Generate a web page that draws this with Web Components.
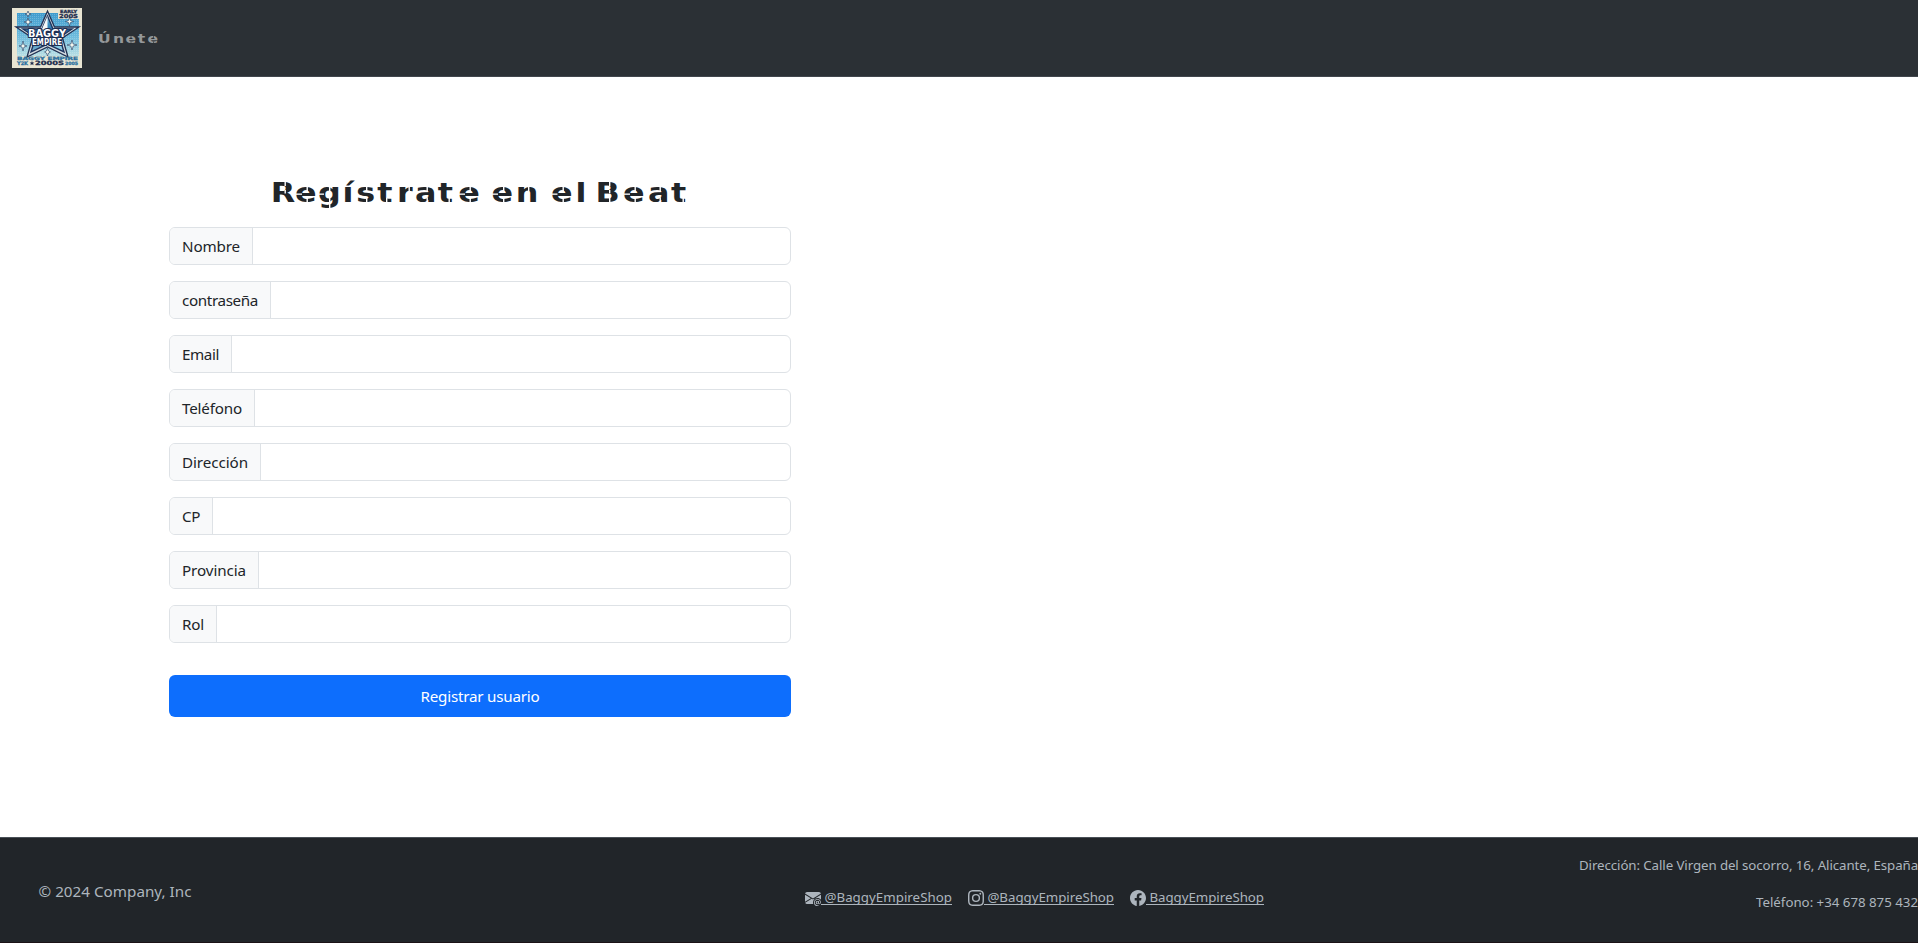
<!DOCTYPE html>
<html lang="es">
<head>
<meta charset="utf-8">
<title>Baggy Empire</title>
<style>
html,body{margin:0;height:100%;background:#fff;overflow:hidden}
body{font:15.2px/24px "Noto Sans","Open Sans",sans-serif;color:#212529}
</style>
</head>
<body>
<baggy-page></baggy-page>
<script>
const define=(name,html,setup)=>customElements.define(name,class extends HTMLElement{
  connectedCallback(){
    if(this.shadowRoot)return;
    const t=document.createElement('template');
    t.innerHTML=html;
    this.attachShadow({mode:'open'}).append(t.content.cloneNode(true));
    if(setup)setup(this,this.shadowRoot);
  }
});

/* Text spread evenly over a set advance width */
define('fit-text',`<style>:host{display:inline-block;white-space:pre}span{display:inline-block}:host([underlined]) span{text-decoration:underline;text-decoration-thickness:1px;text-underline-offset:1.5px;text-decoration-skip-ink:none}</style><span><slot></slot></span>`,
(el,root)=>{
  const s=root.querySelector('span'),w=+el.getAttribute('w');
  s.style.letterSpacing='0px';
  s.style.letterSpacing=((w-s.getBoundingClientRect().width)/el.textContent.length)+'px';
  el.style.width=w+'px';
});

define('brand-logo',`<style>:host{display:block;width:70px;height:60px}svg{display:block}text{font-family:"DejaVu Sans",sans-serif;font-weight:bold}</style>
<svg width="70" height="60" viewBox="0 0 70 60">
<defs>
<linearGradient id="sky" x2="0" y2="1"><stop stop-color="#3f9bcd"/><stop offset=".55" stop-color="#6dbbdd"/><stop offset="1" stop-color="#b9dfe4"/></linearGradient>
<linearGradient id="st" x2=".3" y2="1"><stop stop-color="#d5edf5"/><stop offset=".35" stop-color="#3c91c4"/><stop offset=".6" stop-color="#1a5c96"/><stop offset="1" stop-color="#8acbe4"/></linearGradient>
<pattern id="dots" width="2" height="2" patternUnits="userSpaceOnUse"><rect width="1" height="1" fill="#fff" opacity=".2"/></pattern>
</defs>
<rect width="70" height="60" fill="#e9e5d3"/>
<path d="M5 5H46V11H67V48H5Z" fill="url(#sky)"/><path d="M5 5H46V11H67V48H5Z" fill="url(#dots)"/>
<path d="M35.500 3L42.500 19H67L50.500 30L56 49L35.500 39L15 49L20.500 30L4 19H28.500Z" fill="#d3dce0" stroke="#223052" stroke-width="1.300"/>
<path d="M35.500 8L41 21H60L47.500 29.500L52 44L35.500 36L19 44L23.500 29.500L11 21H30Z" fill="url(#st)" stroke="#203660" stroke-width="1.400"/>
<path d="M35.500 8V24L30 21Z" fill="#f4f8f8"/>
<g fill="#f3f7ef" stroke="#243b62" stroke-width=".6"><path d="M16 10l1 3 3 1-3 1-1 3-1-3-3-1 3-1zM57.500 9l1 3.500 3 1-3 1-1 3.500-1-3.500-3-1 3-1zM11 33l1 4 3 1-3 1-1 4-1-4-3-1 3-1zM60 32l1.200 4 3.800 1-3.800 1-1.200 4-1.200-4-3.800-1 3.800-1zM35.500 40l1 3 2 1-2 1-1 3-1-3-2-1 2-1z"/><path d="M16 3l.8 2.200 2.200.8-2.200.8-.8 2.200-.8-2.200-2.200-.8 2.200-.8z"/></g>
<g fill="#fff" stroke="#1d2c50" stroke-width="2.200" paint-order="stroke" stroke-linejoin="round"><text x="16" y="29" font-size="10.500" textLength="38" lengthAdjust="spacingAndGlyphs">BAGGY</text><text x="20" y="36.500" font-size="8" textLength="30" lengthAdjust="spacingAndGlyphs">EMPIRE</text></g>
<g fill="#202c4c" stroke="#202c4c" stroke-width=".3"><text x="48" y="5.300" font-size="4.200" textLength="17" lengthAdjust="spacingAndGlyphs">EARLY</text><text x="47" y="10" font-size="5.500" textLength="19" lengthAdjust="spacingAndGlyphs">200S</text><text x="23" y="57.200" font-size="5.800" textLength="29" lengthAdjust="spacingAndGlyphs">2000S</text></g>
<g fill="#2c719f" stroke="#2c719f" stroke-width=".3"><text x="5" y="51.800" font-size="4.500" textLength="61" lengthAdjust="spacingAndGlyphs">BAGGY EMPIRE</text><text x="5" y="57" font-size="4.800" textLength="11" lengthAdjust="spacingAndGlyphs">Y2K</text><text x="53" y="57" font-size="4.500" textLength="13" lengthAdjust="spacingAndGlyphs">2005</text></g>
<path d="M20 53l.7 1.500h1.700l-1.300 1 .5 1.700-1.600-1-1.600 1 .5-1.700-1.300-1h1.700z" fill="#202c4c"/>
</svg>`);

define('site-nav',`<style>
:host{display:flex;align-items:flex-start;box-sizing:border-box;height:77px;padding:8px 12px 0;gap:17px;background:#2b3035;border-bottom:1px solid #41464d}
svg{display:block}
text{font:bold 12.500px "DejaVu Sans",sans-serif;fill:#95989a}
</style><brand-logo></brand-logo><a><svg width="62" height="60"><text transform="scale(1.25 1)" x="-.8 11.200 21.200 31 38.800" y="35">Únete</text><path d="M5.500 33.500h1v2h-1zM31.500 28h1v2h-1zM31.500 33.500h1v2h-1zM54 28h1v2h-1zM54 33.500h1v2h-1z" fill="#2b3035" opacity=".7"/></svg></a>`);

define('form-field',`<style>
:host{display:flex;box-sizing:border-box;height:38px;border:1px solid #dee2e6;border-radius:6px;overflow:hidden;background:#fff}
label{padding:6px 12px;background:#f8f9fa;border-right:1px solid #dee2e6;white-space:nowrap}
input{flex:1;min-width:0;border:0;outline:0;padding:6px 12px;font:inherit;background:none}
</style><label for="i"></label><input id="i">`,(el,root)=>{
  const f=document.createElement('fit-text');
  f.setAttribute('w',el.getAttribute('w'));
  f.textContent=el.getAttribute('label');
  root.querySelector('label').append(f);
});

/* Wide stencil lettering: stretched glyphs with thin bridges cut through the bowls */
define('stencil-title',`<style>
:host{display:block;height:34px}
h1{margin:0}svg{display:block}
text{font:bold 26.500px "DejaVu Sans",sans-serif;fill:#212529}
</style><h1><svg width="622" height="34"><text transform="scale(1.2 1)" y="26" x="84.8 105 124.2 144.6 156 173.5 190 205 224 241 262 268.8 289 308 318.3 338.8 348 355.4 378.3 399.2 418.3">Regístrate en el Beat</text><g class="cuts" fill="#fff"></g></svg></h1>`,(el,root)=>{
  const rects=[];
  for(const x of [137.5,160,197,257.500,300.500,334,393.500,465.500,490.500])rects.push([x,10.500,1.400,5],[x,21.500,1.400,6]);
  for(const x of [115.500,440])rects.push([x,5,1.400,5],[x,14,1.400,3.500]);
  rects.push([440,21,1.400,6],[160,27,1.400,6],[217,21.500,1.400,6],[279.500,21.500,1.400,6],[513.500,21.500,1.400,6],[359,10,1.400,5],[239.500,10,1.400,5]);
  for(const x of [127,149,290,323,382.500,455])rects.push([x,17.500,6,1.300]);
  root.querySelector('.cuts').innerHTML=rects.map(([x,y,w,h])=>`<rect x="${x}" y="${y}" width="${w}" height="${h}"/>`).join('');
});

define('register-form',`<style>
:host{display:flex;flex-direction:column;width:622px}
stencil-title{margin-bottom:17px}
form{display:grid;gap:16px}
button{height:42px;margin-top:16px;border:0;border-radius:6px;background:#0d6efd;color:#fff;font:inherit}
</style>
<stencil-title></stencil-title>
<form>
<form-field label="Nombre" w="58"></form-field>
<form-field label="contraseña" w="76"></form-field>
<form-field label="Email" w="37"></form-field>
<form-field label="Teléfono" w="60"></form-field>
<form-field label="Dirección" w="66"></form-field>
<form-field label="CP" w="18"></form-field>
<form-field label="Provincia" w="64"></form-field>
<form-field label="Rol" w="22"></form-field>
<button type="button"><fit-text w="119">Registrar usuario</fit-text></button>
</form>`);

define('social-link',`<style>
:host{display:flex;align-items:center;height:21px;color:#adb5bd;font-size:13.300px;line-height:21px}
svg{display:block;width:16px;height:16px;fill:currentColor}
a{display:block;white-space:pre}
fit-text{vertical-align:top}
</style><svg viewBox="0 0 16 16"></svg><a></a>`,(el,root)=>{
  const icons={
    mail:'<path d="M2 2A2 2 0 0 0 .05 3.555L8 8.414l7.950-4.859A2 2 0 0 0 14 2zm-2 2.697v7.104l5.803-3.558zm6.761 4.097-6.570 4.027A2 2 0 0 0 2 14h6.256A4.500 4.500 0 0 1 8 12.500a4.490 4.490 0 0 1 1.606-3.446l-.367-.225L8 9.586zM16 9.671V4.697l-5.803 3.546.338.208A4.500 4.500 0 0 1 12.500 8c1.414 0 2.675.652 3.500 1.671"/><path d="M15.834 12.244c0 1.168-.577 2.025-1.587 2.025-.503 0-1.002-.228-1.120-.648h-.043c-.118.416-.543.643-1.015.643-.770 0-1.259-.542-1.259-1.434v-.529c0-.844.481-1.400 1.260-1.400.585 0 .870.333.953.630h.030v-.568h.905v2.190c0 .272.180.420.411.420.315 0 .639-.415.639-1.390v-.118c0-1.277-.950-2.326-2.484-2.326h-.040c-1.582 0-2.640 1.067-2.640 2.724v.157c0 1.867 1.237 2.654 2.570 2.654h.045c.507 0 .935-.070 1.180-.180v.731c-.219.100-.643.175-1.237.175h-.044C10.438 16 9 14.820 9 12.646v-.214C9 10.360 10.421 9 12.485 9h.035c2.120 0 3.314 1.430 3.314 3.034zm-4.040.210v.227c0 .586.227.800.581.800.310 0 .564-.170.564-.743v-.367c0-.516-.275-.708-.572-.708-.346 0-.573.245-.573.791"/>',
    instagram:'<path d="M8 0C5.829 0 5.556.010 4.703.048 3.850.088 3.269.222 2.760.420a3.900 3.900 0 0 0-1.417.923A3.900 3.900 0 0 0 .420 2.760C.222 3.268.087 3.850.048 4.700.010 5.555 0 5.827 0 8.001c0 2.172.010 2.444.048 3.297.040.852.174 1.433.372 1.942.205.526.478.972.923 1.417.444.445.890.719 1.416.923.510.198 1.090.333 1.942.372C5.555 15.990 5.827 16 8 16s2.444-.010 3.298-.048c.851-.040 1.434-.174 1.943-.372a3.900 3.900 0 0 0 1.416-.923c.445-.445.718-.891.923-1.417.197-.509.332-1.090.372-1.942C15.990 10.445 16 10.173 16 8s-.010-2.445-.048-3.299c-.040-.851-.175-1.433-.372-1.941a3.900 3.900 0 0 0-.923-1.417A3.900 3.900 0 0 0 13.240.420c-.510-.198-1.092-.333-1.943-.372C10.443.010 10.172 0 7.998 0zM8 1.442c2.136 0 2.389.007 3.232.047.780.035 1.204.166 1.486.275.373.145.640.319.920.599s.453.546.598.920c.110.281.240.705.275 1.485.039.843.047 1.096.047 3.231s-.008 2.389-.047 3.232c-.035.780-.166 1.203-.275 1.485a2.500 2.500 0 0 1-.599.919c-.280.280-.546.453-.920.598-.280.110-.704.240-1.485.276-.843.038-1.096.047-3.232.047s-2.390-.009-3.233-.047c-.780-.036-1.203-.166-1.485-.276a2.500 2.500 0 0 1-.920-.598 2.500 2.500 0 0 1-.600-.920c-.109-.281-.240-.705-.275-1.485-.038-.843-.046-1.096-.046-3.233s.008-2.388.046-3.231c.036-.780.166-1.204.276-1.486.145-.373.319-.640.599-.920s.546-.453.920-.598c.282-.110.705-.240 1.485-.276.843-.038 1.096-.047 3.233-.047m4.270 1.328a.96.96 0 1 0 0 1.920.96.96 0 0 0 0-1.920M8 3.892a4.108 4.108 0 1 0 0 8.217 4.108 4.108 0 0 0 0-8.217m0 1.441a2.667 2.667 0 1 1 0 5.334 2.667 2.667 0 0 1 0-5.334"/>',
    facebook:'<path d="M16 8.049c0-4.446-3.582-8.050-8-8.050C3.580 0-.002 3.603-.002 8.050c0 4.017 2.926 7.347 6.750 7.951v-5.625h-2.030V8.050H6.750V6.275c0-2.017 1.195-3.131 3.022-3.131.876 0 1.791.157 1.791.157v1.980h-1.009c-.993 0-1.303.621-1.303 1.258v1.510h2.218l-.354 2.326H9.250V16c3.824-.604 6.750-3.934 6.750-7.951"/>'
  };
  root.querySelector('svg').innerHTML=icons[el.getAttribute('icon')];
  const f=document.createElement('fit-text');
  f.setAttribute('w',el.getAttribute('w'));
  f.setAttribute('underlined','');
  f.textContent=' '+el.getAttribute('label');
  root.querySelector('a').append(f);
});

define('site-footer',`<style>
:host{display:grid;grid-template-columns:805px 1fr auto;box-sizing:border-box;height:105px;background:#212529;border-top:1px solid #495057;color:#adb5bd;overflow:hidden}
.copy{padding:41px 0 0 38.500px}
nav{display:flex;gap:16px;padding-top:49px}
address{display:flex;flex-direction:column;align-items:flex-end;gap:16px;padding-top:17px;font-style:normal;font-size:13.300px;line-height:21px}
</style>
<div class="copy"><fit-text w="153">© 2024 Company, Inc</fit-text></div>
<nav><social-link icon="mail" label="@BaggyEmpireShop" w="131"></social-link><social-link icon="instagram" label="@BaggyEmpireShop" w="130"></social-link><social-link icon="facebook" label="BaggyEmpireShop" w="118"></social-link></nav>
<address><fit-text w="339">Dirección: Calle Virgen del socorro, 16, Alicante, España</fit-text><fit-text w="162">Teléfono: +34 678 875 432</fit-text></address>`);

define('baggy-page',`<style>
:host{display:flex;flex-direction:column;height:943px;box-sizing:border-box;border-bottom:1px solid #1b1216}
main{flex:1;padding:99px 0 0 169px}
</style><site-nav></site-nav><main><register-form></register-form></main><site-footer></site-footer>`);
</script>
</body>
</html>
